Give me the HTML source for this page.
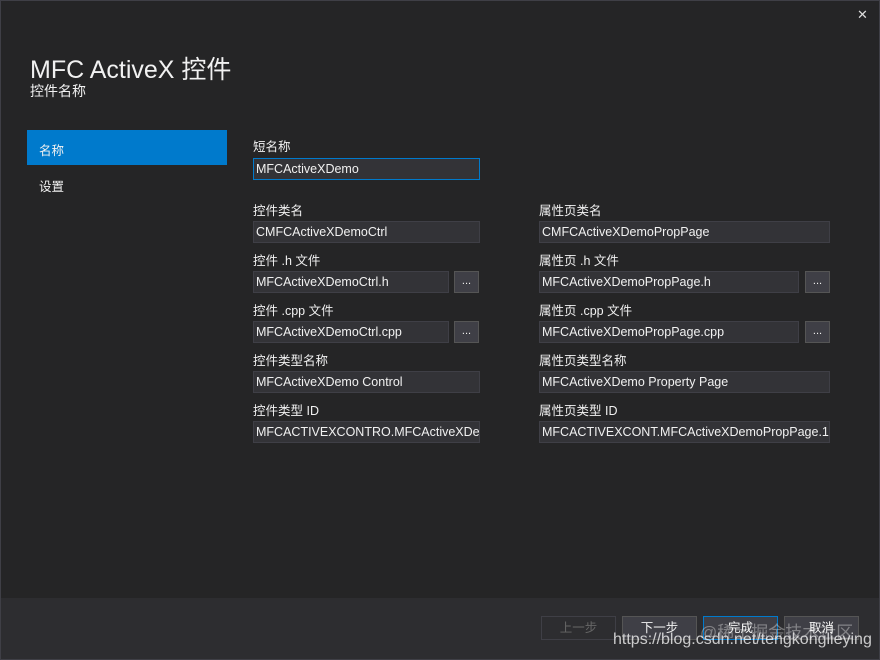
<!DOCTYPE html>
<html><head><meta charset="utf-8"><style>
body{margin:0;width:880px;height:660px;background:#252526;font-family:"Liberation Sans","Noto Sans CJK SC",sans-serif;color:#f1f1f1;position:relative;overflow:hidden}
.a{position:absolute}
.t{font-size:12.5px;white-space:nowrap}
.in{position:absolute;height:20px;background:#333337;border:1px solid #3f3f46;color:#f1f1f1;font-size:12.5px;line-height:21px;padding-left:2px;box-sizing:content-box;overflow:hidden;white-space:nowrap}
.bt{position:absolute;width:23px;height:20px;background:#3f3f46;border:1px solid #555;color:#f1f1f1;font-size:11px;text-align:center;line-height:18px}
.fb{position:absolute;top:616px;width:73px;height:22px;background:#3f3f46;border:1px solid #555;font-size:12.5px;text-align:center;line-height:22px}
</style></head><body>
<div class="a" style="left:0;top:0;width:878px;height:658px;border:1px solid #3f3f46"></div>
<div class="a" style="left:857px;top:7px;font-size:13px;color:#ddd">✕</div>
<div class="a" style="left:30px;top:50px;font-size:25px;white-space:nowrap">MFC ActiveX 控件</div>
<div class="a" style="left:30px;top:81px;font-size:14px">控件名称</div>
<div class="a" style="left:27px;top:130px;width:200px;height:35px;background:#007acc"></div>
<div class="a t" style="left:39px;top:140px">名称</div>
<div class="a t" style="left:39px;top:176px">设置</div>

<div class="a t" style="left:253px;top:136px">短名称</div>
<div class="in" style="left:253px;top:158px;width:223px;border-color:#007acc">MFCActiveXDemo</div>

<div class="a t" style="left:253px;top:200px">控件类名</div>
<div class="in" style="left:253px;top:221px;width:223px">CMFCActiveXDemoCtrl</div>
<div class="a t" style="left:253px;top:250px">控件 .h 文件</div>
<div class="in" style="left:253px;top:271px;width:192px">MFCActiveXDemoCtrl.h</div>
<div class="bt" style="left:454px;top:271px">...</div>
<div class="a t" style="left:253px;top:300px">控件 .cpp 文件</div>
<div class="in" style="left:253px;top:321px;width:192px">MFCActiveXDemoCtrl.cpp</div>
<div class="bt" style="left:454px;top:321px">...</div>
<div class="a t" style="left:253px;top:350px">控件类型名称</div>
<div class="in" style="left:253px;top:371px;width:223px">MFCActiveXDemo Control</div>
<div class="a t" style="left:253px;top:400px">控件类型 ID</div>
<div class="in" style="left:253px;top:421px;width:223px">MFCACTIVEXCONTRO.MFCActiveXDemo</div>

<div class="a t" style="left:539px;top:200px">属性页类名</div>
<div class="in" style="left:539px;top:221px;width:287px">CMFCActiveXDemoPropPage</div>
<div class="a t" style="left:539px;top:250px">属性页 .h 文件</div>
<div class="in" style="left:539px;top:271px;width:256px">MFCActiveXDemoPropPage.h</div>
<div class="bt" style="left:805px;top:271px">...</div>
<div class="a t" style="left:539px;top:300px">属性页 .cpp 文件</div>
<div class="in" style="left:539px;top:321px;width:256px">MFCActiveXDemoPropPage.cpp</div>
<div class="bt" style="left:805px;top:321px">...</div>
<div class="a t" style="left:539px;top:350px">属性页类型名称</div>
<div class="in" style="left:539px;top:371px;width:287px">MFCActiveXDemo Property Page</div>
<div class="a t" style="left:539px;top:400px">属性页类型 ID</div>
<div class="in" style="left:539px;top:421px;width:287px">MFCACTIVEXCONT.MFCActiveXDemoPropPage.1</div>

<div class="a" style="left:1px;top:598px;width:878px;height:61px;background:#2d2d30"></div>
<div class="fb" style="left:541px;background:#2d2d30;border-color:#3f3f46;color:#666">上一步</div>
<div class="fb" style="left:622px">下一步</div>
<div class="fb" style="left:703px;border-color:#007acc">完成</div>
<div class="fb" style="left:784px">取消</div>
<div class="a" style="left:700px;top:618px;font-size:17px;color:rgba(255,255,255,0.35);white-space:nowrap">@稀土掘金技术社区</div>
<div class="a" style="left:613px;top:631px;font-size:16px;color:rgba(255,255,255,0.75);white-space:nowrap">https://blog.csdn.net/tengkonglieying</div>
</body></html>
